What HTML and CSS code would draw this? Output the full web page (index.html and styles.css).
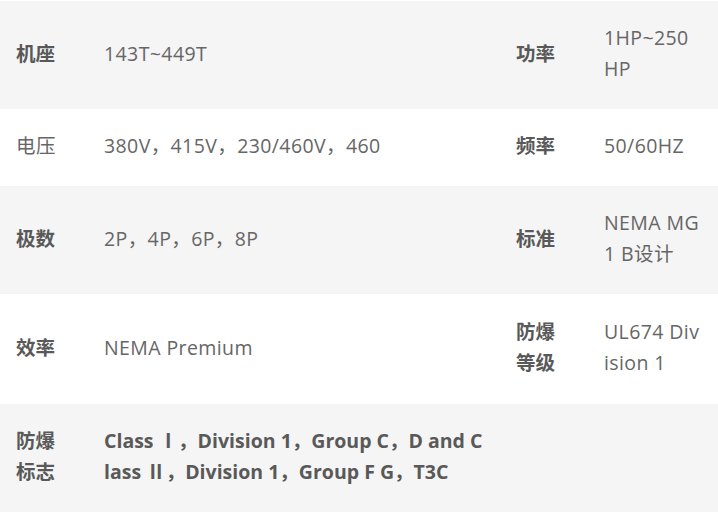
FILE: index.html
```
<!DOCTYPE html>
<html lang="zh">
<head>
<meta charset="utf-8">
<link rel="stylesheet" href="styles.css">
</head>
<body>
<table class="spec">
  <colgroup>
    <col class="c-label"><col class="c-value"><col class="c-label"><col class="c-value2">
  </colgroup>
  <tr class="odd">
    <th>机座</th><td>143T~449T</td>
    <th>功率</th><td>1HP~250 HP</td>
  </tr>
  <tr>
    <td class="plain">电压</td><td>380V，415V，230/460V，460</td>
    <th>频率</th><td>50/60HZ</td>
  </tr>
  <tr class="odd">
    <th>极数</th><td>2P，4P，6P，8P</td>
    <th>标准</th><td>NEMA MG 1 B设计</td>
  </tr>
  <tr class="tall">
    <th>效率</th><td>NEMA Premium</td>
    <th>防爆等级</th><td>UL674 Division 1</td>
  </tr>
  <tr class="odd">
    <th>防爆标志</th><td class="strong">Class Ⅰ，Division 1，Group C，D and Class Ⅱ，Division 1，Group F G，T3C</td>
    <td></td><td></td>
  </tr>
</table>
</body>
</html>
```
FILE: styles.css
```
html, body {
  margin: 0;
  padding: 0;
  background: #fff;
}
body {
  padding-top: 1px;
  font-family: "Open Sans", "Noto Sans CJK SC", sans-serif;
  font-size: 19.5px;
  color: #666;
}
.spec {
  width: 718px;
  border-collapse: collapse;
  table-layout: fixed;
}
.c-label { width: 88px; }
.c-value { width: 412px; }
.c-value2 { width: 130px; }
.spec th, .spec td {
  padding: 21px 16px 25px;
  line-height: 31px;
  text-align: left;
  vertical-align: middle;
  word-break: break-all;
  letter-spacing: 0.4px;
}
.spec .tall th, .spec .tall td {
  padding-top: 22px;
  padding-bottom: 26px;
}
.spec th {
  font-weight: bold;
  color: #595959;
  letter-spacing: 0;
}
.spec td.plain {
  font-weight: normal;
}
.spec td.strong {
  font-weight: bold;
  color: #595959;
  letter-spacing: 0;
}
.odd {
  background: #f5f5f5;
}
```
